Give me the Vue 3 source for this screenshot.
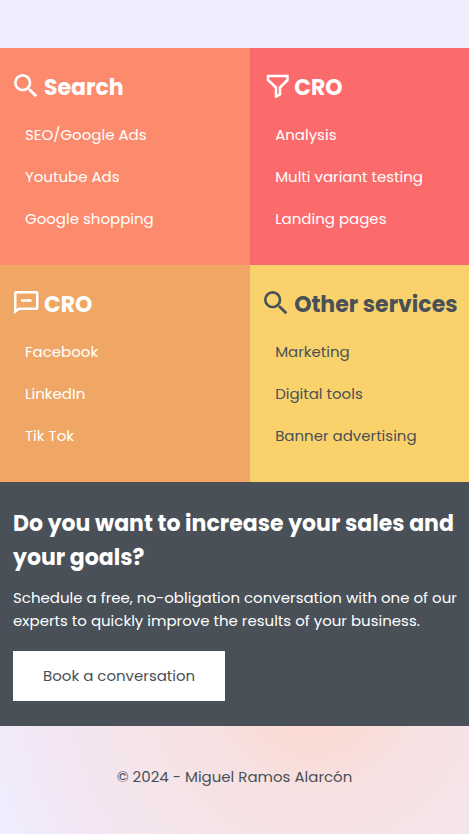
<script setup>
const search = 'M15.5 14h-.79l-.28-.27A6.471 6.471 0 0 0 16 9.5 6.5 6.5 0 1 0 9.5 16c1.61 0 3.09-.59 4.23-1.57l.27.28v.79l5 4.99L20.49 19l-4.99-5zm-6 0C7.01 14 5 11.99 5 9.5S7.01 5 9.5 5 14 7.01 14 9.5 11.99 14 9.5 14z'
const services = [
  { title: 'Search', icon: 'search', tone: 'coral', items: ['SEO/Google Ads', 'Youtube Ads', 'Google shopping'] },
  { title: 'CRO', icon: 'funnel', tone: 'red', items: ['Analysis', 'Multi variant testing', 'Landing pages'] },
  { title: 'CRO', icon: 'message', tone: 'orange', items: ['Facebook', 'LinkedIn', 'Tik Tok'] },
  { title: 'Other services', icon: 'search', tone: 'yellow', items: ['Marketing', 'Digital tools', 'Banner advertising'] },
]
</script>

<template>
  <div class="page">
    <main>
      <section class="services">
        <article v-for="(s, i) in services" :key="i" class="card" :class="s.tone">
          <h2>
            <svg v-if="s.icon === 'search'" class="icon" viewBox="0 0 24 24" aria-hidden="true">
              <path :d="search" fill="currentColor" />
            </svg>
            <svg v-else-if="s.icon === 'funnel'" class="icon" viewBox="0 0 32 32" aria-hidden="true">
              <path d="M8 6H27.5V10L20 17.5V24.5L16 26.7V17.5L8 10Z" fill="none" stroke="currentColor" stroke-width="2.5" stroke-linejoin="round" />
            </svg>
            <svg v-else class="icon" viewBox="0 0 32 32" aria-hidden="true">
              <path d="M4 27V6.5Q4 4 6.5 4H26Q28.5 4 28.5 6.5V20.5Q28.5 23 26 23H9.5ZM6.5 22L8.7 20.5H26V6.5H6.5ZM11 12.3H21.5V14.7H11Z" fill="currentColor" fill-rule="evenodd" />
            </svg>
            <span>{{ s.title }}</span>
          </h2>
          <ul>
            <li v-for="item in s.items" :key="item">{{ item }}</li>
          </ul>
        </article>
      </section>
      <section class="cta">
        <h2>Do you want to increase your sales and your goals?</h2>
        <p>Schedule a free, no-obligation conversation with one of our experts to quickly improve the results of your business.</p>
        <button type="button">Book a conversation</button>
      </section>
    </main>
    <footer>© 2024 - Miguel Ramos Alarcón</footer>
  </div>
</template>

<style>
body {
  margin: 0;
  background: #efeeff;
}
</style>

<style scoped>
.page {
  padding-top: 48px;
  font-family: Poppins, Inter, sans-serif;
  font-size: 15px;
  line-height: 24px;
  color: #495057;
}
h2, p, ul {
  margin: 0;
}
h2 {
  font-size: 22px;
  line-height: 34px;
  font-weight: 700;
}
.services {
  display: grid;
  grid-template-columns: 8fr 7fr;
}
.card {
  min-width: 0;
  padding: 22px 0 34px 10px;
  color: #fff;
}
.card h2 {
  display: flex;
  gap: 2px;
  line-height: 36px;
  white-space: nowrap;
}
.icon {
  flex: none;
  width: 32px;
  height: 32px;
}
.coral { background: #fc8b6d; }
.red { background: #fc6b6b; }
.orange { background: #f0a765; }
.yellow { background: #f9d26c; color: #495057; }
ul {
  display: grid;
  gap: 18px;
  margin-top: 17px;
  padding: 0 0 0 15px;
  list-style: none;
}
.cta {
  padding: 25px 0 25px 13px;
  background: #495057;
  color: #fff;
}
.cta p {
  margin: 11px 0 19px;
  line-height: 23px;
}
button {
  display: block;
  height: 50px;
  padding: 0 30px;
  border: 0;
  background: #fff;
  color: #495057;
  font: inherit;
}
footer {
  padding: 39px 0 45px;
  text-align: center;
  background: radial-gradient(circle at 67% -40%, #fcd5cc 0, #f9ddd8 75px, #f7e1e2 110px, #f5e4e9 190px, #f3e6f5 275px, #efeeff 345px);
}
</style>
